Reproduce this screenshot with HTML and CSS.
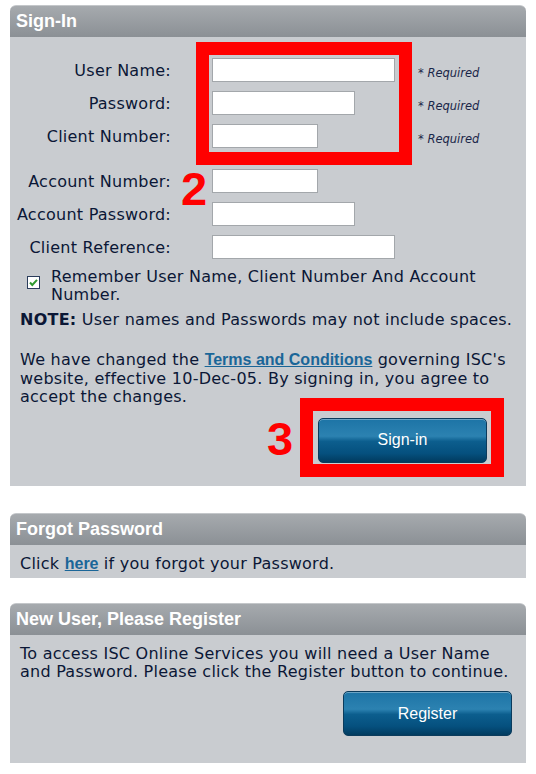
FILE: index.html
```html
<!DOCTYPE html>
<html>
<head>
<meta charset="utf-8">
<link rel="stylesheet" href="styles.css">
</head>
<body>
<div class="page">
  <section class="panel">
    <div class="panel-head">Sign-In</div>
    <div class="panel-body signin">
      <div class="form-grid">
        <label class="lbl">User Name:</label>
        <span class="input w-l"></span>
        <span class="req">* Required</span>
        <label class="lbl">Password:</label>
        <span class="input w-m"></span>
        <span class="req">* Required</span>
        <label class="lbl">Client Number:</label>
        <span class="input w-s"></span>
        <span class="req">* Required</span>
      </div>
      <div class="form-grid second">
        <label class="lbl">Account Number:</label>
        <span class="input w-s"></span>
        <span></span>
        <label class="lbl">Account Password:</label>
        <span class="input w-m"></span>
        <span></span>
        <label class="lbl">Client Reference:</label>
        <span class="input w-l"></span>
        <span></span>
      </div>
      <div class="remember">
        <svg class="check" width="13" height="13" viewBox="0 0 13 13"><rect x="0.5" y="0.5" width="12" height="12" fill="#fff" stroke="#2b3d5c"/><path d="M3 6.5 L5.3 9 L10 3.8" fill="none" stroke="#2f9a2f" stroke-width="2"/></svg>
        <span class="remember-text">Remember User Name, Client Number And Account Number.</span>
      </div>
      <p class="note"><b>NOTE:</b> User names and Passwords may not include spaces.</p>
      <p class="terms">We have changed the <a class="link" href="#">Terms and Conditions</a> governing ISC's website, effective 10-Dec-05. By signing in, you agree to accept the changes.</p>
      <div class="btn-row signin-row">
        <button class="btn">Sign-in</button>
      </div>
      <div class="redbox box-fields"></div>
      <div class="redbox box-btn"></div>
      <div class="mark mark-2">2</div>
      <div class="mark mark-3">3</div>
    </div>
  </section>

  <section class="panel forgot">
    <div class="panel-head">Forgot Password</div>
    <div class="panel-body simple">
      <p class="line">Click <a class="link" href="#">here</a> if you forgot your Password.</p>
    </div>
  </section>

  <section class="panel newuser">
    <div class="panel-head">New User, Please Register</div>
    <div class="panel-body register">
      <p class="line">To access ISC Online Services you will need a User Name and Password. Please click the Register button to continue.</p>
      <div class="btn-row register-row">
        <button class="btn">Register</button>
      </div>
    </div>
  </section>
</div>
</body>
</html>
```

FILE: styles.css
```css
html, body {
  margin: 0;
  padding: 0;
  background: #ffffff;
}
.page {
  padding: 5px 10px 0 10px;
  width: 516px;
  display: flex;
  flex-direction: column;
  font-family: "DejaVu Sans", Verdana, sans-serif;
  font-size: 16px;
  letter-spacing: 0.25px;
  color: #0b1736;
}
.panel {
  width: 516px;
}
.forgot {
  margin-top: 27px;
}
.newuser {
  margin-top: 25px;
}
.panel-head {
  height: 32px;
  box-sizing: border-box;
  border-top: 1px solid #c4c7ca;
  border-radius: 6px 6px 0 0;
  background: linear-gradient(#a6aaae, #8b9095);
  color: #ffffff;
  font-family: "Liberation Sans", Arial, sans-serif;
  font-weight: bold;
  font-size: 18px;
  letter-spacing: 0;
  line-height: 30px;
  padding-left: 6px;
}
.panel-body {
  background: #c9ccd0;
  position: relative;
}
.signin {
  padding-top: 21px;
  height: 449px;
  box-sizing: border-box;
}
.form-grid {
  display: grid;
  grid-template-columns: 161px 183px auto;
  column-gap: 41px;
  grid-auto-rows: 24px;
  row-gap: 9px;
  align-items: center;
}
.form-grid .req {
  margin-left: -18px;
}
.second {
  margin-top: 21px;
}
.lbl {
  text-align: right;
  white-space: nowrap;
  padding-top: 1px;
}
.input {
  display: block;
  height: 24px;
  box-sizing: border-box;
  background: #ffffff;
  border: 1px solid #a3a7ab;
}
.w-l { width: 183px; }
.w-m { width: 143px; }
.w-s { width: 106px; }
.req {
  font-style: italic;
  font-size: 11.5px;
  letter-spacing: 0;
  color: #1a2648;
  padding-top: 6px;
}
.remember {
  display: flex;
  align-items: flex-start;
  margin-top: 9px;
  padding-left: 17px;
  line-height: 18px;
}
.check {
  margin-top: 8px;
  margin-right: 11px;
  flex: none;
}
.remember-text {
  width: 445px;
}
.note {
  margin: 7px 0 0 0;
  padding-left: 10px;
  line-height: 18px;
}
.terms {
  margin: 22px 0 0 0;
  padding: 0 10px;
  line-height: 18.5px;
}
.line {
  margin: 0;
  padding: 0 10px;
  line-height: 18px;
}
.link {
  color: #1a6698;
  font-family: "Liberation Sans", Arial, sans-serif;
  font-weight: bold;
  font-size: 16px;
  letter-spacing: 0;
  line-height: 1;
  text-decoration: underline;
}
.btn-row {
  display: flex;
  justify-content: flex-end;
}
.signin-row {
  margin-top: 11px;
  padding-right: 39px;
}
.register-row {
  margin-top: 10px;
  padding-right: 14px;
}
.btn {
  width: 169px;
  height: 45px;
  border: 1px solid #0b3b5c;
  border-radius: 5px;
  background: linear-gradient(#1d74a6 0%, #2c82b1 40%, #0c5e8e 52%, #05507e 80%, #013b5f 100%);
  box-shadow: inset 0 1px 0 rgba(255,255,255,0.35);
  color: #ffffff;
  font-family: "Liberation Sans", Arial, sans-serif;
  font-size: 16px;
  padding: 0;
}
.simple {
  padding: 10px 0 5px 0;
  height: 33px;
  box-sizing: border-box;
}
.register {
  padding: 10px 0 27px 0;
}
.redbox {
  position: absolute;
  box-sizing: border-box;
  border: 13px solid #ff0000;
}
.box-fields {
  left: 186px;
  top: 5px;
  width: 216px;
  height: 123px;
}
.box-btn {
  left: 290px;
  top: 361px;
  width: 204px;
  height: 79px;
}
.mark {
  position: absolute;
  color: #ff0000;
  font-family: "Liberation Sans", Arial, sans-serif;
  font-weight: bold;
  font-size: 47px;
  letter-spacing: 0;
  line-height: 47px;
}
.mark-2 {
  left: 171px;
  top: 128px;
}
.mark-3 {
  left: 257px;
  top: 378px;
}
```
